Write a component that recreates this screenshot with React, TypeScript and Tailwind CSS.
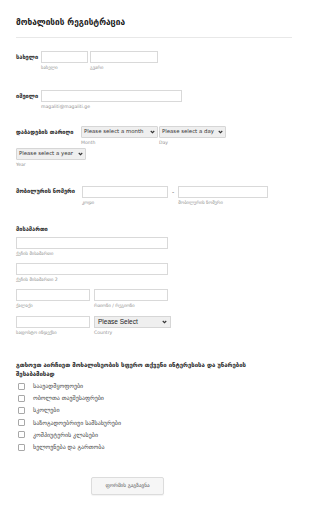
import React from "react";

const Chevron = () => (
  <svg width="5" height="4" viewBox="0 0 10 8" className="shrink-0">
    <polyline points="1.5,2 5,5.5 8.5,2" fill="none" stroke="#333" strokeWidth="2.2" />
  </svg>
);

function Field({ width, sub, select }: { width: string; sub?: string; select?: string }) {
  return (
    <div className="flex flex-col">
      {select ? (
        <div className={`${width} h-[12px] flex items-center justify-between gap-[2px] rounded-[1px] border border-[#d6d6d6] bg-[#efefef] px-[2px] text-[5.4px] leading-none text-[#333]`}>
          <span className="whitespace-nowrap">{select}</span>
          <Chevron />
        </div>
      ) : (
        <input className={`${width} h-[12px] border border-[#d9d9d9] bg-white outline-none`} />
      )}
      {sub && <span className="mt-[2px] text-[4.6px] leading-[6px] text-[#8f8f8f] whitespace-nowrap">{sub}</span>}
    </div>
  );
}

const interests = [
  "საავადმყოფოები",
  "ობოლთა თავშესაფრები",
  "სკოლები",
  "საზოგადოებრივი სამსახურები",
  "კომპიუტერის კლასები",
  "ხელოვნება და გართობა",
];

const label = "whitespace-nowrap text-[5.7px] font-bold leading-[12px] text-[#1e1e1e]";

export default function App() {
  return (
    <div className="w-[310px] min-h-[513px] bg-white px-4 font-['DejaVu_Sans',Verdana,sans-serif] text-[#222]">
      <h1 className="pt-[17px] text-[8.3px] font-bold leading-[10px]">მოხალისის რეგისტრაცია</h1>
      <div className="mt-[10px] mr-[2px] h-px bg-[#e8e8e8]" />

      {/* name */}
      <div className="mt-[13px] flex">
        <span className={`${label} min-w-[25px]`}>სახელი</span>
        <div className="flex gap-[2px]">
          <Field width="w-[47px]" sub="სახელი" />
          <Field width="w-[68px]" sub="გვარი" />
        </div>
      </div>

      {/* email */}
      <div className="mt-[19px] flex">
        <span className={`${label} min-w-[25px]`}>იმეილი</span>
        <Field width="w-[141px]" sub="magaliti@magaliti.ge" />
      </div>

      {/* birth date */}
      <div className="mt-[16px] flex">
        <span className={`${label} min-w-[65px]`}>დაბადების თარიღი</span>
        <div className="flex gap-[1px]">
          <Field width="w-[77px]" select="Please select a month" sub="Month" />
          <Field width="w-[67px]" select="Please select a day" sub="Day" />
        </div>
      </div>
      <div className="mt-[2px] flex">
        <Field width="w-[70px]" select="Please select a year" sub="Year" />
      </div>

      {/* phone */}
      <div className="mt-[18px] flex">
        <span className="min-w-[66px] whitespace-nowrap text-[5.7px] font-bold leading-[10px] text-[#1e1e1e]">მობილურის ნომერი</span>
        <Field width="w-[86px]" sub="კოდი" />
        <span className="mx-[4px] text-[6px] leading-[12px] text-[#555]">-</span>
        <Field width="w-[90px]" sub="მობილურის ნომერი" />
      </div>

      {/* address */}
      <div className="mt-[19px] text-[5.7px] font-bold leading-[8px] text-[#1e1e1e]">მისამართი</div>
      <div className="mt-[4px]">
        <Field width="w-[152px]" sub="ქუჩის მისამართი" />
      </div>
      <div className="mt-[6px]">
        <Field width="w-[152px]" sub="ქუჩის მისამართი 2" />
      </div>
      <div className="mt-[6px] flex gap-[4px]">
        <Field width="w-[74px]" sub="ქალაქი" />
        <Field width="w-[74px]" sub="რაიონი / რეგიონი" />
      </div>
      <div className="mt-[7px] flex gap-[4px]">
        <Field width="w-[74px]" sub="საფოსტო ინდექსი" />
        <div className="flex flex-col">
          <div className="flex h-[12px] w-[77px] items-center justify-between border border-[#d6d6d6] bg-[#efefef] px-[3px] font-['Liberation_Sans',Arial,sans-serif] text-[6.5px] leading-none text-[#222]">
            <span>Please Select</span>
            <Chevron />
          </div>
          <span className="mt-[2px] text-[4.6px] leading-[6px] text-[#8f8f8f]">Country</span>
        </div>
      </div>

      {/* interests */}
      <p className="mt-[24px] w-[250px] text-[6px] font-bold leading-[9px] text-[#1e1e1e]">
        გთხოვთ აირჩიეთ მოხალისეობის სფერო თქვენი ინტერესისა და უნარების შესაბამისად
      </p>
      <div className="mt-[2px] flex flex-col">
        {interests.map((item) => (
          <label key={item} className="flex h-[12.2px] items-center gap-[8px] pl-[2px]">
            <span className="h-[7px] w-[7px] rounded-[1px] border border-[#a8a8a8] bg-white" />
            <span className="text-[6px] leading-none text-[#444]">{item}</span>
          </label>
        ))}
      </div>

      <button className="mt-[24px] ml-[75px] h-[18px] w-[73px] rounded-[2px] border border-[#dcdcdc] bg-[#f6f6f6] text-[5.2px] text-[#555] shadow-[0_1px_1px_rgba(0,0,0,0.05)]">
        ფორმის გაგზავნა
      </button>
    </div>
  );
}
